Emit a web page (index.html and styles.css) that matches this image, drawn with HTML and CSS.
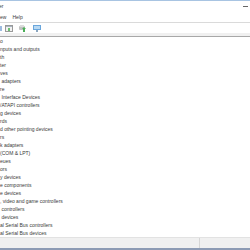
FILE: index.html
```html
<!DOCTYPE html>
<html lang="en">
<head>
    <meta charset="UTF-8">
    <title>Device Manager</title>
    <link rel="stylesheet" href="styles.css">
</head>
<body>
    <div class="window">
        <div class="desk-edge"></div>

        <header class="titlebar">
            <span class="title">er</span>
            <span class="minimize"></span>
        </header>

        <nav class="menubar">
            <span>ew</span>
            <span>Help</span>
        </nav>

        <div class="toolbar">
            <svg width="3" height="7" viewBox="0 0 3 7">
                <rect x="0" y="1" width="2" height="5" fill="#9dbbe0"/>
            </svg>
            <svg width="8" height="7" viewBox="0 0 8 7">
                <rect x="0.5" y="0.5" width="7" height="6" fill="#f2f2f2" stroke="#9a9a9a"/>
                <rect x="1" y="1" width="6" height="1" fill="#a9b4c2"/>
                <rect x="3" y="3" width="2" height="3" fill="#6cc071"/>
            </svg>
            <svg class="gap" width="8" height="7" viewBox="0 0 8 7">
                <rect x="0" y="1" width="6" height="4" rx="1" fill="#c2c2c2"/>
                <rect x="1" y="0" width="4" height="2" fill="#dcdcdc"/>
                <path d="M4 7 L4 4 L3 4 L5 2 L7 4 L6 4 L6 7 Z" fill="#4caf58"/>
            </svg>
            <svg class="gap" width="8" height="7" viewBox="0 0 8 7">
                <rect x="0" y="0" width="8" height="5" fill="#6aa6dc"/>
                <rect x="1" y="1" width="6" height="3" fill="#b8d9f3"/>
                <rect x="3" y="5" width="2" height="2" fill="#8aa6c0"/>
            </svg>
        </div>

        <div class="toolbar-edge"></div>

        <ul class="tree">
            <li>o</li>
            <li>nputs and outputs</li>
            <li>th</li>
            <li>ter</li>
            <li>ves</li>
            <li>&nbsp;adapters</li>
            <li>re</li>
            <li>&nbsp;Interface Devices</li>
            <li>/ATAPI controllers</li>
            <li>g devices</li>
            <li>rds</li>
            <li>d other pointing devices</li>
            <li>rs</li>
            <li>k adapters</li>
            <li>(COM &amp; LPT)</li>
            <li>eues</li>
            <li>ors</li>
            <li>y devices</li>
            <li>e components</li>
            <li>e devices</li>
            <li>, video and game controllers</li>
            <li>&nbsp;controllers</li>
            <li>&nbsp;devices</li>
            <li>al Serial Bus controllers</li>
            <li>al Serial Bus devices</li>
        </ul>

        <footer class="statusbar">
            <div class="status-main"></div>
            <div class="status-side"></div>
        </footer>

        <div class="desk-bottom"></div>
    </div>
</body>
</html>
```

FILE: styles.css
```css
body {
    margin: 0;
    padding: 0;
    background-color: #ffffff;
    font-family: "Liberation Sans", Arial, sans-serif;
    color: #3a3a3a;
}

.window {
    width: 250px;
    height: 250px;
    overflow: hidden;
    display: flex;
    flex-direction: column;
    background-color: #ffffff;
}

.desk-edge {
    height: 1px;
    background-color: #a8c4e2;
}

.titlebar {
    height: 11px;
    display: flex;
    align-items: center;
    justify-content: space-between;
    font-size: 5px;
}

.title {
    margin-left: -1px;
}

.minimize {
    width: 5px;
    height: 1px;
    background-color: #666666;
    margin-right: 2px;
}

.menubar {
    height: 10px;
    display: flex;
    align-items: center;
    gap: 6px;
    font-size: 5px;
    border-bottom: 1px solid #dadada;
}

.toolbar {
    height: 10px;
    display: flex;
    align-items: center;
    gap: 2px;
    padding-top: 1px;
}

.toolbar svg {
    display: block;
}

.toolbar .gap {
    margin-left: 4px;
}

.toolbar-edge {
    height: 3px;
    background-color: #f0f0f0;
    border-bottom: 1px solid #a8a8a8;
}

.tree {
    list-style: none;
    margin: 0;
    padding: 0;
    flex: 1;
    font-size: 5px;
}

.tree li {
    height: 8px;
    line-height: 8px;
    white-space: nowrap;
}

.statusbar {
    height: 10px;
    display: flex;
    background-color: #f0f0f0;
    border-top: 1px solid #e2e2e2;
}

.status-main {
    width: 199px;
    border-right: 1px solid #d6d6d6;
}

.status-side {
    flex: 1;
}

.desk-bottom {
    height: 2px;
    background-color: #8d9bb4;
}
```
